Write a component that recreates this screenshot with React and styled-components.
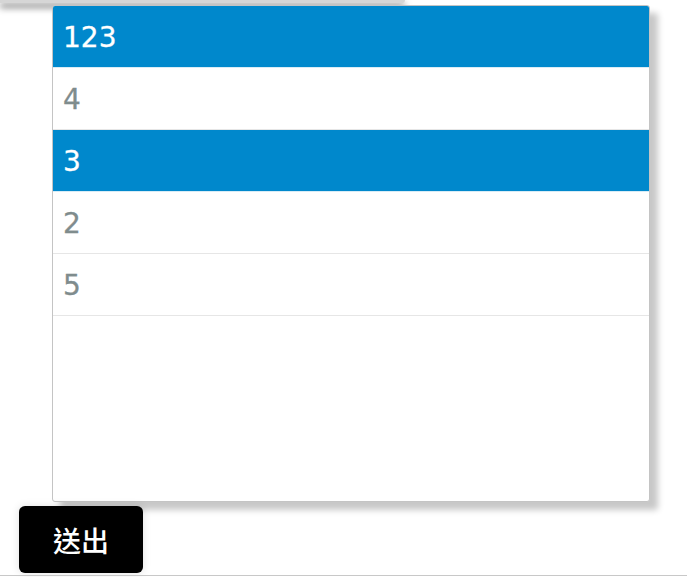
import React, { useState } from "react";
import styled, { createGlobalStyle } from "styled-components";

const GlobalStyle = createGlobalStyle`
  html, body {
    margin: 0;
    padding: 0;
    background: #fff;
    font-family: "DejaVu Sans", Verdana, sans-serif;
  }
`;

const items = [
  { id: 1, label: "123", selected: true },
  { id: 2, label: "4", selected: false },
  { id: 3, label: "3", selected: true },
  { id: 4, label: "2", selected: false },
  { id: 5, label: "5", selected: false },
];

const App = () => {
  const [list, setList] = useState(items);

  const toggle = (id) => {
    setList(list.map((it) => (it.id === id ? { ...it, selected: !it.selected } : it)));
  };

  return (
    <Page>
      <GlobalStyle />
      <TopStrip />
      <ListBox>
        {list.map((item) => (
          <ListItem
            key={item.id}
            $selected={item.selected}
            onClick={() => toggle(item.id)}
          >
            {item.label}
          </ListItem>
        ))}
      </ListBox>
      <SubmitButton>送出</SubmitButton>
      <BottomLine />
    </Page>
  );
};

const Page = styled.div`
  display: flex;
  flex-direction: column;
  align-items: flex-start;
  width: 687px;
  height: 577px;
  overflow: hidden;
`;

const TopStrip = styled.div`
  width: 405px;
  height: 3px;
  background: #d6d6d6;
  border-radius: 0 0 4px 0;
  box-shadow: 0 4px 7px rgba(0, 0, 0, 0.75);
`;

const ListBox = styled.ul`
  list-style: none;
  margin: 2px 0 0 52px;
  padding: 0;
  width: 596px;
  height: 495px;
  background: #fff;
  border: 1px solid #c4c4c4;
  border-radius: 3px;
  box-shadow: 8px 8px 6px rgba(0, 0, 0, 0.22);
  overflow: hidden;
`;

const ListItem = styled.li`
  height: 62px;
  box-sizing: border-box;
  padding: 3px 10px 0;
  display: flex;
  align-items: center;
  font-size: 28px;
  line-height: 1;
  cursor: pointer;
  color: ${(p) => (p.$selected ? "#fff" : "#7f8c8d")};
  background: ${(p) => (p.$selected ? "#0088cc" : "#fff")};
  border-bottom: 1px solid ${(p) => (p.$selected ? "#d8ecf6" : "#e6e6e6")};
  -webkit-text-stroke: 0.3px currentColor;
`;

const SubmitButton = styled.button`
  margin: 4px 0 0 19px;
  width: 124px;
  height: 67px;
  border: none;
  border-radius: 6px;
  background: #000;
  color: #fff;
  font-family: "Noto Sans CJK TC", "Noto Sans CJK SC", sans-serif;
  font-size: 28px;
  font-weight: 500;
  box-shadow: 0 0 8px rgba(0, 0, 0, 0.12);
  cursor: pointer;
`;

const BottomLine = styled.div`
  margin-top: 2px;
  width: 100%;
  height: 1px;
  background: #c8c8c8;
`;

export default App;
